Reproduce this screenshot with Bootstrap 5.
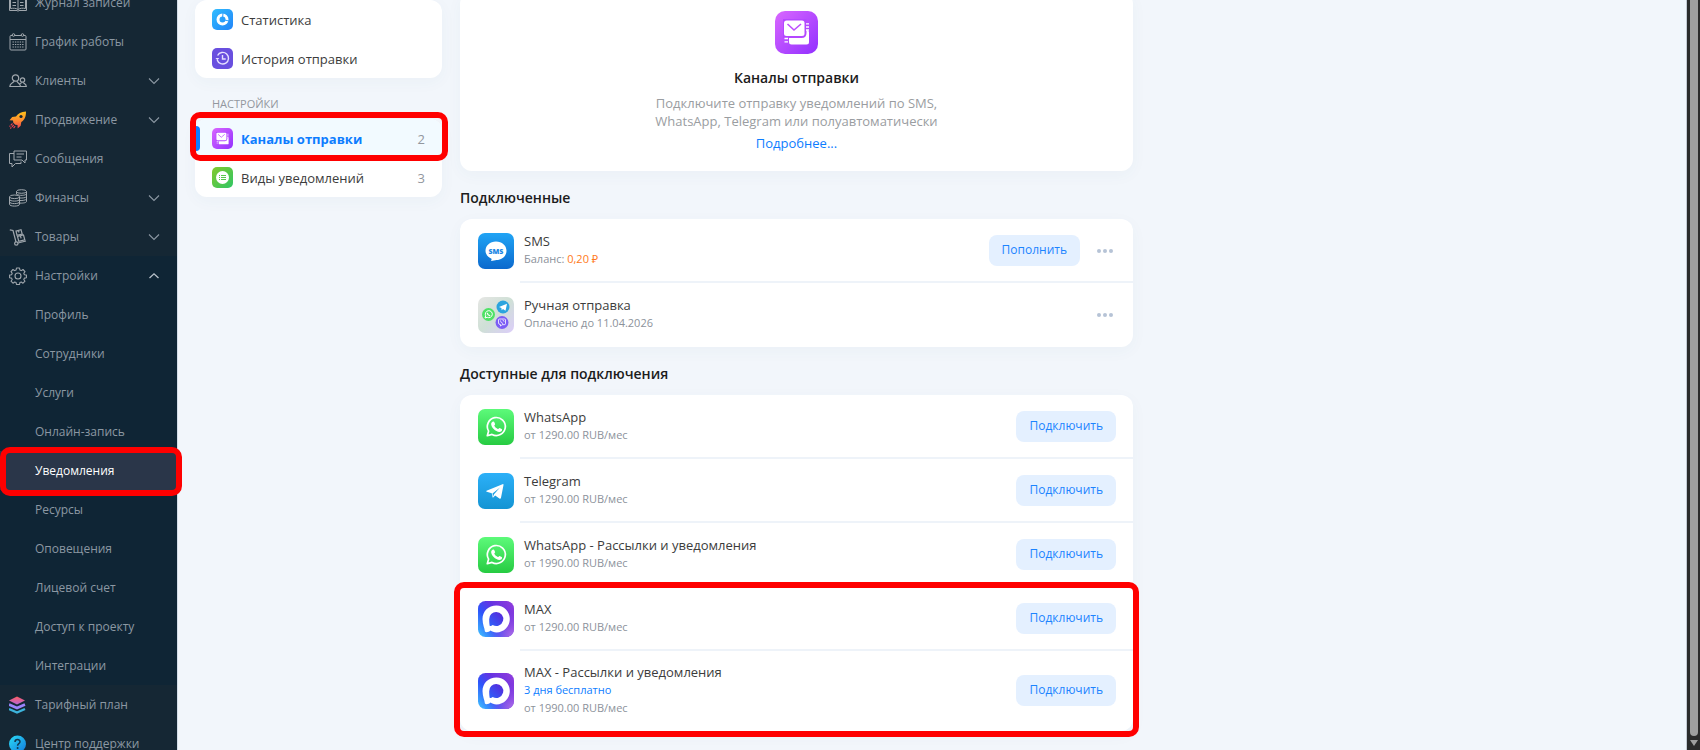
<!DOCTYPE html>
<html lang="ru">
<head>
<meta charset="utf-8">
<meta name="viewport" content="width=device-width, initial-scale=1">
<title>Каналы отправки</title>
<link rel="stylesheet" href="https://cdn.jsdelivr.net/npm/bootstrap@5.3.0/dist/css/bootstrap.min.css">
<style>
body { font-family: "Open Sans", "Noto Sans", sans-serif; font-size: 13px; line-height: 18px; background: #f2f6fb; color: #3c3c3c; }
a { text-decoration: none; }
.sidebar { width: 177px; background: #152734; border-right: 1px solid #d3dde8; box-sizing: content-box; }
.sidebar-list { margin-top: -17px; }
.side-link { height: 39px; padding: 0 17px 0 9px; gap: 8px; font-size: 12px; color: #8c98a3; }
.side-link svg { flex: none; }
.side-link .side-icon { width: 18px; height: 18px; }
.side-sub { padding-left: 35px; }
.side-open { background: #0f2535; }
.side-link.active { background: #2a3649; color: #fff; }
.workspace { padding-left: 17px; gap: 18px; }
.menu { width: 247px; }
.panel { background: #fff; border-radius: 12px; box-shadow: 0 4px 16px rgba(60, 90, 130, .04); }
.menu-link { height: 39px; padding: 0 17px; gap: 8px; color: #3c3c3c; }
.menu-link svg { width: 21px; height: 21px; flex: none; }
.menu-link.active { background: #f2faff; color: #0d7dff; font-weight: 700; border-radius: 12px 12px 0 0; }
.menu-link.active::before { content: ""; position: absolute; left: 0; top: 7px; bottom: 7px; width: 5px; background: #0d7dff; border-radius: 0 4px 4px 0; }
.menu-count { color: #92979e; font-weight: 400; }
.menu-title { font-size: 11px; color: #92979e; padding: 17px 17px 6px; }
.content-col { max-width: 673px; }
.hero { margin-top: -8px; padding: 19px 16px 19px; color: #9a9da1; }
.hero svg { width: 43px; height: 43px; }
.hero h1 { font-size: 14px; line-height: 20px; font-weight: 600; color: #1c1c1c; margin: 14px 0 6px; }
.hero p { max-width: 290px; }
.blue, .blue:hover { color: #0d7dff; }
.section-title { font-size: 14px; line-height: 20px; font-weight: 600; color: #1c1c1c; margin: 17px 0 11px; }
.channel { height: 64px; padding-left: 18px; gap: 2px; }
.channel.tall { height: 80px; }
.channel > svg { width: 36px; height: 36px; flex: none; }
.channel-body { margin-left: 4px; padding: 0 17px 0 4px; border-bottom: 2px solid #eef3f9; }
.last .channel-body { border-color: transparent; }
.note { font-size: 11px; line-height: 18px; color: #8c929b; }
.orange { color: #ff7a1a; }
.btn-soft { height: 31px; padding: 0 13px; border: 0; border-radius: 8px; font-size: 12px; line-height: 18px; background: #e4f0ff; color: #1c84ff; }
.btn-more { border: 0; background: none; padding: 0 3px; margin-left: 14px; line-height: 1; }
.callout::after { content: ""; position: absolute; z-index: 5; border: 6px solid #f00; border-radius: 10px; pointer-events: none; inset: -5px -6px -6px; }
.side-link.callout::after { inset: -4px -5px -6px 0; }
.menu-link.callout::after { inset: -7px -6px -3px -5px; }
.scroll-rail { width: 14px; background: #2b2b2b; border-left: 1px solid #c3cad3; }
.scroll-thumb { width: 8px; background: #9f9f9f; border-radius: 0 0 4px 4px; }
@media (max-width: 900px) { .menu { width: 200px; } }
</style>
</head>
<body class="overflow-hidden">
<svg width="0" height="0" class="position-absolute" aria-hidden="true">
  <defs>
    <linearGradient id="gPurple" x1="0" y1="0" x2="1" y2="1"><stop stop-color="#d967ff"/><stop offset="1" stop-color="#9230ff"/></linearGradient>
    <linearGradient id="gGreen" x1="0" y1="0" x2="0" y2="1"><stop stop-color="#5dfa7a"/><stop offset="1" stop-color="#27cb42"/></linearGradient>
    <linearGradient id="gTelegram" x1="0" y1="0" x2="0" y2="1"><stop stop-color="#2cb0f8"/><stop offset="1" stop-color="#1494d3"/></linearGradient>
    <linearGradient id="gSms" x1="0" y1="0" x2="0" y2="1"><stop stop-color="#20a4f5"/><stop offset="1" stop-color="#0c69cd"/></linearGradient>
    <linearGradient id="gMax" x1="0" y1="1" x2="1" y2=".2"><stop stop-color="#42c8ff"/><stop offset=".38" stop-color="#2c55fb"/><stop offset=".68" stop-color="#6632e2"/><stop offset="1" stop-color="#8a3bdd"/></linearGradient>
    <radialGradient id="gMaxGlow" cx="1" cy="1" r=".7"><stop stop-color="#b573e8"/><stop offset="1" stop-color="#9a4be0" stop-opacity="0"/></radialGradient>
    <linearGradient id="gMaxDot" x1="0" y1="1" x2="1" y2="0"><stop stop-color="#2e63fb"/><stop offset="1" stop-color="#5a22d8"/></linearGradient>
    <linearGradient id="gManual" x1="0" y1="0" x2="1" y2="1"><stop stop-color="#e6e6e4"/><stop offset=".5" stop-color="#cfe0d6"/><stop offset="1" stop-color="#dccdfa"/></linearGradient>
    <linearGradient id="gRocket" x1="0" y1="0" x2="0" y2="1"><stop stop-color="#ffc21a"/><stop offset=".5" stop-color="#ff8f2e"/><stop offset="1" stop-color="#ef3f52"/></linearGradient>
    <linearGradient id="gStat" x1="0" y1="0" x2="1" y2="1"><stop stop-color="#30bdff"/><stop offset="1" stop-color="#2284f8"/></linearGradient>
    <linearGradient id="gTypes" x1="0" y1="0" x2="1" y2="1"><stop stop-color="#83c92c"/><stop offset="1" stop-color="#2fc665"/></linearGradient>
    <linearGradient id="gHelp" x1="0" y1="0" x2="1" y2="1"><stop stop-color="#2bdcf5"/><stop offset="1" stop-color="#1179dd"/></linearGradient>
    <linearGradient id="gPlanTop" x1="0" y1="0" x2="0" y2="1"><stop stop-color="#ff5d60"/><stop offset="1" stop-color="#b766d8"/></linearGradient>
  </defs>
  <symbol id="chevDown" viewBox="0 0 12 8"><path d="M1 1.500 6 6.500 11 1.500" fill="none" stroke="#8c98a3" stroke-width="1.100"/></symbol>
  <symbol id="chevUp" viewBox="0 0 12 8"><path d="M1.500 6 6 1.800 10.500 6" fill="none" stroke="#b9c2ca" stroke-width="1.300"/></symbol>
  <symbol id="channels" viewBox="0 0 43 43">
    <rect width="43" height="43" rx="10" fill="url(#gPurple)"/>
    <rect x="14" y="19" width="20" height="14.500" rx="2.500" fill="#fff"/>
    <path d="M8 8h23.500v14q0 5-5 5H8z" fill="#b448ff"/>
    <rect x="9" y="9.500" width="20.500" height="15.500" rx="2.500" fill="#fff"/>
    <path d="M12.500 13 19 19l7-6" fill="none" stroke="#bd4eff" stroke-width="1.600"/>
    <path d="M31 12.800h3M31 16h3M31 19h3M9.500 27.500h3.500M9.500 30.800h3.500" stroke="#fff" stroke-width="1.300"/>
  </symbol>
  <symbol id="whatsapp" viewBox="0 0 36 36">
    <rect width="36" height="36" rx="7" fill="url(#gGreen)"/>
    <path d="m9.300 26.700 1.300-4.600a9 9 0 1 1 3.400 3.300z" fill="none" stroke="#fff" stroke-width="1.700" stroke-linejoin="round"/>
    <path d="M14.600 12.800c.6-.6 1.300-.5 1.600.1l.9 2.100c.2.700-1 1.300-.8 1.800.8 1.500 2 2.500 3.500 3.200.7.200 1.200-1.300 1.800-1.100l2.100 1c.9.500.2 2.100-.6 2.600-3.700 2-10.600-4-9.900-8 .1-.7.700-1.200 1.400-1.700z" fill="#fff"/>
  </symbol>
  <symbol id="max" viewBox="0 0 36 36">
    <rect width="36" height="36" rx="7.500" fill="url(#gMax)"/><rect width="36" height="36" rx="7.500" fill="url(#gMaxGlow)"/>
    <path d="M18.400 4.500C26 4.500 31.800 10.600 31.800 18c0 7.500-5.900 13.400-13.300 13.400-2.700 0-4.500-.8-6-1.900-1.400 1.500-5.500 2.600-5.700.5C6.800 27.500 4.500 23.500 4.500 18 4.500 10.300 10.500 4.500 18.400 4.500z" fill="#fff"/>
    <path d="M18.300 11a7 7 0 1 1-3.600 13c-1 1-2.800 1.500-3 .7-.3-1.400-.5-3.500-.5-6.500A7 7 0 0 1 18.300 11z" fill="url(#gMaxDot)"/>
  </symbol>
  <symbol id="dots" viewBox="0 0 16 4"><g fill="#b6c3d6"><circle cx="2" cy="2" r="2"/><circle cx="8" cy="2" r="2"/><circle cx="14" cy="2" r="2"/></g></symbol>
</svg>

<div class="d-flex vh-100">
  <nav class="sidebar flex-shrink-0" aria-label="Главное меню">
    <div class="sidebar-list">
      <a href="#" class="side-link d-flex align-items-center"><svg class="side-icon" viewBox="0 0 18 18" fill="none" stroke="#a0a7ad" stroke-width="1"><path d="M9 3.500C7 2 4 2 1.500 2.500v12C4 14 7 14 9 15.500c2-1.500 5-1.500 7.500-1v-12C14 2 11 2 9 3.500zv12M3.500 5.500h3.500M3.500 8.500h3.500M3.500 11.500h3.500M11 5.500h3.500M11 8.500h3.500M11 11.500h3.500M.5 4v12.500H8l1 .7 1-.7h7.500V4"/></svg>Журнал записей</a>
      <a href="#" class="side-link d-flex align-items-center"><svg class="side-icon" viewBox="0 0 18 18" fill="none" stroke="#a0a7ad" stroke-width="1"><rect x="1" y="2.500" width="16" height="14.500" rx="1"/><path d="M1 6.500h16"/><circle cx="4.500" cy="2" r="1.300" fill="#152734"/><circle cx="13.500" cy="2" r="1.300" fill="#152734"/><path d="M3.500 9h11M3.500 11.500h11M3.500 14h11" stroke-dasharray="1.400 1" stroke-width="1.200"/></svg>График работы</a>
      <a href="#" class="side-link d-flex align-items-center"><svg class="side-icon" viewBox="0 0 18 18" fill="none" stroke="#a0a7ad" stroke-width="1.200"><circle cx="6.500" cy="6" r="3.200"/><path d="M5 9c0 2-4.200 1.800-4.200 5.500h10.700C11.500 11 8 11 8 9"/><circle cx="13.500" cy="8" r="2.200"/><path d="M12.800 10.200c0 1-1.800 1-2.300 2M14.300 10.200c0 1.500 3 1.300 3 4.300h-5.500"/></svg>Клиенты<svg class="ms-auto" width="12" height="8"><use href="#chevDown"/></svg></a>
      <a href="#" class="side-link d-flex align-items-center"><svg class="side-icon" viewBox="0 0 18 18"><path d="M17 .5C12 .8 9 2.500 7 5.500L3.200 6 .5 9.200l3.500.3.300 2.200 2 2 2.200.3.200 3.500 3-2.800.6-3.700C15.500 9 17 6 17 .5z" fill="url(#gRocket)"/><circle cx="12" cy="5.500" r="1.600" fill="#152734"/><path d="M3.500 12.500.5 15.500M4.700 14l-3.400 3.500M6.200 15.200l-2 2.300" stroke="#f04350" stroke-width="1.100" stroke-dasharray="2.500 .8"/></svg>Продвижение<svg class="ms-auto" width="12" height="8"><use href="#chevDown"/></svg></a>
      <a href="#" class="side-link d-flex align-items-center"><svg class="side-icon" viewBox="0 0 18 18" fill="none" stroke="#a0a7ad" stroke-width="1"><path d="M5 1h12.500v9h-1.500v3l-3-3H5zM7.500 4h7.500M7.500 7h5M5 3.500H.5v10H3v3.500L6.500 13.500H12v-2"/></svg>Сообщения</a>
      <a href="#" class="side-link d-flex align-items-center"><svg class="side-icon" viewBox="0 0 18 18" fill="none" stroke="#a0a7ad" stroke-width="1"><ellipse cx="12.500" cy="2.500" rx="5" ry="1.800"/><path d="M7.500 2.500V5M17.500 2.500v10c0 1-3 1.800-6.500 1.600M17.500 5c-1 1.500-7 2-10 .3M17.500 7.500c-1 1.500-4 1.600-6.500 1.500M17.500 10c-1 1.300-4 1.600-6.500 1.500"/><ellipse cx="5.500" cy="7.800" rx="5" ry="1.800"/><path d="M.5 7.800v7.500c0 2.400 10 2.400 10 0V7.800M.5 10.300c0 2.400 10 2.400 10 0M.5 12.800c0 2.400 10 2.400 10 0"/></svg>Финансы<svg class="ms-auto" width="12" height="8"><use href="#chevDown"/></svg></a>
      <a href="#" class="side-link d-flex align-items-center"><svg class="side-icon" viewBox="0 0 18 18" fill="none" stroke="#a0a7ad" stroke-width="1.200"><path d="M.8 1.800 4 2.500l3 11.500"/><circle cx="7.300" cy="15.500" r="1.700"/><path d="m9 15 8-2M7 3l5-1.300L13.200 6 8 7.300zM8.500 8.500l6-1.500 1.300 4.800-6 1.500zM9.500 2.500l.5 2M11.500 8l.6 2.300"/></svg>Товары<svg class="ms-auto" width="12" height="8"><use href="#chevDown"/></svg></a>
      <div class="side-open">
        <a href="#" class="side-link d-flex align-items-center"><svg class="side-icon" viewBox="0 0 18 18" fill="none" stroke="#a0a7ad" stroke-width="1.100" stroke-linejoin="round"><circle cx="9" cy="9" r="3"/><path d="M7.500 1h3l.4 2 1.400.6L14 2.500 16 4.600l-1.200 1.700.6 1.400 2 .3v2.700l-2 .4-.6 1.400 1.200 1.700-2 2-1.700-1.200-1.400.6-.4 1.900h-3l-.4-1.900-1.400-.6L4 16.200l-2-2 1.200-1.700-.6-1.400-2-.4V8l2-.3.6-1.400L2 4.600l2-2.100 1.700 1.100L7.100 3z"/></svg>Настройки<svg class="ms-auto" width="12" height="8"><use href="#chevUp"/></svg></a>
        <a href="#" class="side-link side-sub d-flex align-items-center">Профиль</a>
        <a href="#" class="side-link side-sub d-flex align-items-center">Сотрудники</a>
        <a href="#" class="side-link side-sub d-flex align-items-center">Услуги</a>
        <a href="#" class="side-link side-sub d-flex align-items-center">Онлайн-запись</a>
        <a href="#" class="side-link side-sub d-flex align-items-center active callout position-relative">Уведомления</a>
        <a href="#" class="side-link side-sub d-flex align-items-center">Ресурсы</a>
        <a href="#" class="side-link side-sub d-flex align-items-center">Оповещения</a>
        <a href="#" class="side-link side-sub d-flex align-items-center">Лицевой счет</a>
        <a href="#" class="side-link side-sub d-flex align-items-center">Доступ к проекту</a>
        <a href="#" class="side-link side-sub d-flex align-items-center">Интеграции</a>
      </div>
      <a href="#" class="side-link d-flex align-items-center"><svg class="side-icon" viewBox="0 0 18 18"><path d="M8 .5 16 4.500 8 8.500 0 4.500z" fill="url(#gPlanTop)"/><path d="M0 8.500 8 12l8-3.500" fill="none" stroke="#9a84fb" stroke-width="2.600"/><path d="M0 13 8 16.500l8-3.500" fill="none" stroke="#3db4dc" stroke-width="2.400"/></svg>Тарифный план</a>
      <a href="#" class="side-link d-flex align-items-center"><svg class="side-icon" viewBox="0 0 18 18"><circle cx="8.500" cy="9" r="8.500" fill="url(#gHelp)"/><path d="M6 7c0-3.300 5-3.200 5-.3 0 2-2.400 2-2.400 4" fill="none" stroke="#12384f" stroke-width="1.500"/><circle cx="8.600" cy="13" r="1" fill="#12384f"/></svg>Центр поддержки</a>
    </div>
  </nav>

  <div class="workspace d-flex flex-grow-1 pe-3">
    <aside class="menu flex-shrink-0">
      <div class="panel">
        <a href="#" class="menu-link d-flex align-items-center"><svg viewBox="0 0 21 21"><rect width="21" height="21" rx="5" fill="url(#gStat)"/><circle cx="10.500" cy="10.500" r="4.500" fill="none" stroke="#fff" stroke-width="3"/><path d="M10.500 10.500 11 3.500M10.500 10.500l6.500 1.500" stroke="#2b9dfb" stroke-width="1"/></svg>Статистика</a>
        <a href="#" class="menu-link d-flex align-items-center"><svg viewBox="0 0 21 21"><rect width="21" height="21" rx="5" fill="#694fdf"/><path d="M5.200 12a5.800 5.800 0 1 0 .4-4.500" fill="none" stroke="#e6e0ff" stroke-width="1.400"/><path d="M3.500 10h3.800l-2 2.300z" fill="#e6e0ff"/><path d="M10.500 7v4h3.200" fill="none" stroke="#e6e0ff" stroke-width="1.400"/></svg>История отправки</a>
      </div>
      <div class="menu-title">НАСТРОЙКИ</div>
      <div class="panel">
        <a href="#" class="menu-link d-flex align-items-center active callout position-relative"><svg><use href="#channels"/></svg>Каналы отправки<span class="menu-count ms-auto">2</span></a>
        <a href="#" class="menu-link d-flex align-items-center"><svg viewBox="0 0 21 21"><rect width="21" height="21" rx="5" fill="url(#gTypes)"/><circle cx="10.500" cy="10.500" r="6.500" fill="#fff"/><path d="M7 8.500h1M9 8.500h5M7 10.500h1M9 10.500h5M7 12.500h1M9 12.500h5" stroke="#58c84a" stroke-width="1"/></svg>Виды уведомлений<span class="menu-count ms-auto">3</span></a>
      </div>
    </aside>

    <main class="content-col flex-grow-1">
      <section class="panel hero text-center">
        <svg class="d-block mx-auto"><use href="#channels"/></svg>
        <h1>Каналы отправки</h1>
        <p class="mx-auto mb-1">Подключите отправку уведомлений по SMS, WhatsApp, Telegram или полуавтоматически</p>
        <a href="#" class="blue">Подробнее...</a>
      </section>

      <h2 class="section-title">Подключенные</h2>
      <section class="panel">
        <div class="channel d-flex align-items-center"><svg viewBox="0 0 36 36"><rect width="36" height="36" rx="7" fill="url(#gSms)"/><path d="M18 8.500c6 0 10.500 4 10.500 9.300S24 27 18.500 27c-1.500 0-3.500 1-5.500 1 .5-.8.700-1.500.5-2.300C10 24 7.500 21.500 7.500 17.800 7.500 12.500 12 8.500 18 8.500z" fill="#fff"/><text x="18" y="21" text-anchor="middle" font-family="Open Sans, sans-serif" font-size="7" font-weight="800" fill="#1c86e4">SMS</text></svg>
          <div class="channel-body d-flex align-items-center flex-grow-1 h-100"><div class="me-auto"><div>SMS</div><div class="note">Баланс: <span class="orange">0,20 ₽</span></div></div><button type="button" class="btn-soft">Пополнить</button><button type="button" class="btn-more" aria-label="Ещё"><svg width="16" height="4"><use href="#dots"/></svg></button></div></div>
        <div class="channel last d-flex align-items-center"><svg viewBox="0 0 36 36"><rect width="36" height="36" rx="7" fill="url(#gManual)"/><circle cx="25" cy="10" r="6.500" fill="#2ba4de"/><path d="m21 10 8-3.300-1.500 7-2.500-1.800-1.300 1.300-.3-2.300z" fill="#fff"/><circle cx="10.500" cy="17.500" r="6.500" fill="#4ee266"/><path d="m7 21 .7-2.200a3.500 3.500 0 1 1 1.500 1.500z" fill="none" stroke="#fff" stroke-width="1"/><path d="M9.200 15.800c.3 1.800 1.200 2.700 3 3" stroke="#fff" stroke-width="1.200" fill="none"/><circle cx="24" cy="25.500" r="6.500" fill="#7c5cf5"/><path d="M21.500 22h5q1 0 1 1v3.500q0 1.200-1.200 1.200H24l-1.500 1.500v-1.700q-2 0-2-1.500v-3q0-1 1-1zM22.500 23.500c.2 1.700 1 2.600 2.600 3M24.500 23c1 .1 1.500.7 1.600 1.700" fill="none" stroke="#fff" stroke-width=".8"/></svg>
          <div class="channel-body d-flex align-items-center flex-grow-1 h-100"><div class="me-auto"><div>Ручная отправка</div><div class="note">Оплачено до 11.04.2026</div></div><button type="button" class="btn-more" aria-label="Ещё"><svg width="16" height="4"><use href="#dots"/></svg></button></div></div>
      </section>

      <h2 class="section-title">Доступные для подключения</h2>
      <section class="panel">
        <div class="channel d-flex align-items-center"><svg><use href="#whatsapp"/></svg>
          <div class="channel-body d-flex align-items-center flex-grow-1 h-100"><div class="me-auto"><div>WhatsApp</div><div class="note">от 1290.00 RUB/мес</div></div><button type="button" class="btn-soft">Подключить</button></div></div>
        <div class="channel d-flex align-items-center"><svg viewBox="0 0 36 36"><rect width="36" height="36" rx="7" fill="url(#gTelegram)"/><path d="M8.500 17.800 24.500 11.200q1.200-.4 1 .9L23 24.800q-.4 1.500-1.600.7l-4.200-3.100-2 2q-.6.500-.7-.4l-.7-3.700-5-1.600q-1.200-.4-.3-.9z" fill="#fff"/><path d="m14.500 20.500 7.500-6-6 6.800-1 2.500z" fill="#1ea0e2"/></svg>
          <div class="channel-body d-flex align-items-center flex-grow-1 h-100"><div class="me-auto"><div>Telegram</div><div class="note">от 1290.00 RUB/мес</div></div><button type="button" class="btn-soft">Подключить</button></div></div>
        <div class="channel d-flex align-items-center"><svg><use href="#whatsapp"/></svg>
          <div class="channel-body d-flex align-items-center flex-grow-1 h-100"><div class="me-auto"><div>WhatsApp - Рассылки и уведомления</div><div class="note">от 1990.00 RUB/мес</div></div><button type="button" class="btn-soft">Подключить</button></div></div>
        <div class="callout position-relative">
          <div class="channel d-flex align-items-center"><svg><use href="#max"/></svg>
            <div class="channel-body d-flex align-items-center flex-grow-1 h-100"><div class="me-auto"><div>MAX</div><div class="note">от 1290.00 RUB/мес</div></div><button type="button" class="btn-soft">Подключить</button></div></div>
          <div class="channel tall last d-flex align-items-center"><svg><use href="#max"/></svg>
            <div class="channel-body d-flex align-items-center flex-grow-1 h-100"><div class="me-auto"><div>MAX - Рассылки и уведомления</div><div class="note"><a href="#" class="blue">3 дня бесплатно</a></div><div class="note">от 1990.00 RUB/мес</div></div><button type="button" class="btn-soft">Подключить</button></div></div>
        </div>
      </section>
    </main>
  </div>

  <div class="scroll-rail flex-shrink-0 d-flex flex-column align-items-center" aria-hidden="true">
    <div class="scroll-thumb flex-grow-1"></div>
    <svg class="my-1" width="8" height="6" viewBox="0 0 8 6"><path d="M0 0h8L4 6z" fill="#9f9f9f"/></svg>
  </div>
</div>
<script src="https://cdn.jsdelivr.net/npm/bootstrap@5.3.0/dist/js/bootstrap.bundle.min.js"></script>
</body>
</html>
